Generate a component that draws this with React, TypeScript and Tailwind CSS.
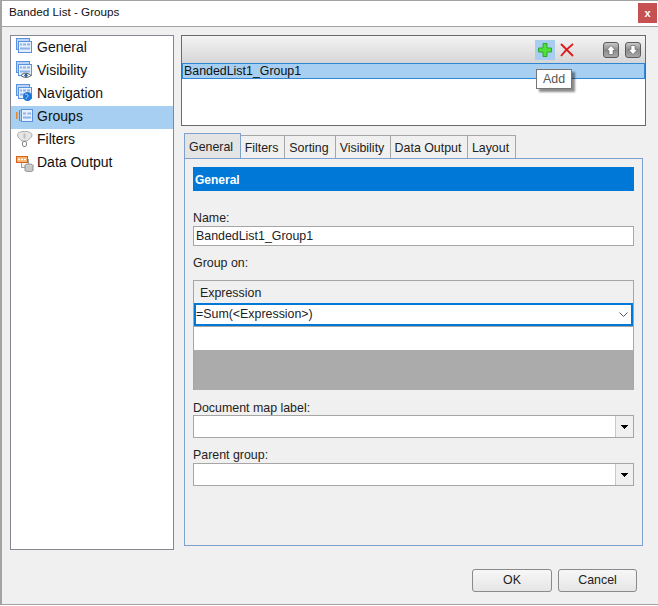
import type { ReactNode } from 'react';

const font = { fontFamily: '"Liberation Sans", Arial, sans-serif' };

// stacked report bands, the base of most of the nav icons
function Band({ x = 0, y = 0 }: { x?: number; y?: number }) {
  return (
    <g transform={`translate(${x} ${y})`}>
      <rect x="0.500" y="0.500" width="13" height="11" fill="#bcd4f6" stroke="#5b92e0" />
      <rect x="2.500" y="3.500" width="13" height="11" fill="#e6effc" stroke="#5b92e0" />
      <path d="M4 6.500h2M7 6.500h3M11 6.500h3M4 10.500h10" stroke="#8db3ea" strokeWidth="2" />
    </g>
  );
}

function GeneralIcon() {
  return (
    <svg className="mb-[3px]" width="18" height="18" viewBox="0 0 18 18">
      <Band />
    </svg>
  );
}

function VisibilityIcon() {
  return (
    <svg className="mb-[3px]" width="18" height="18" viewBox="0 0 18 18">
      <Band />
      <path d="M5 14.500c2.500-3 7-3 10 0-3 2.500-7.500 2.500-10 0z" fill="#fff" stroke="#44505e" />
      <circle cx="10" cy="14.300" r="1.600" fill="#2c5c98" />
    </svg>
  );
}

function NavigationIcon() {
  return (
    <svg className="mb-[3px]" width="18" height="18" viewBox="0 0 18 18">
      <Band />
      <circle cx="11.500" cy="12.500" r="4.500" fill="#1f78d8" />
      <path d="M9 10.500c2-1 3 0 3 1.500s-2 1-2 3" stroke="#9fd0f8" fill="none" />
    </svg>
  );
}

function GroupsIcon() {
  return (
    <svg className="mb-[3px]" width="18" height="18" viewBox="0 0 18 18">
      <rect x="0" y="5" width="1.500" height="7" fill="#e8862c" />
      <path d="M4.500 3.500h-1v10h1" fill="none" stroke="#4a86d8" />
      <rect x="5.500" y="2.500" width="11" height="12" fill="#e6effc" stroke="#5b92e0" />
      <path d="M7 6.500h3M11.500 6.500h3.500M7 10.500h8" stroke="#8db3ea" strokeWidth="2" />
    </svg>
  );
}

function FiltersIcon() {
  return (
    <svg className="mb-[3px]" width="18" height="18" viewBox="0 0 18 18">
      <path d="M1.500 5c0-2.500 3-3.500 7-3.500s7.500 1 7.500 3.500c0 2.500-3.500 4.500-5 6h-5c-1.500-1.500-4.500-3.500-4.500-6z" fill="#e6e6e6" stroke="#a8a8a8" />
      <path d="M8.500 3.500v5" stroke="#bdbdbd" strokeWidth="2" />
      <rect x="6.500" y="11.500" width="4" height="5" rx="1.500" fill="#fff" stroke="#8a8a8a" />
    </svg>
  );
}

function OutputIcon() {
  return (
    <svg className="mb-[2px]" width="18" height="18" viewBox="0 0 18 18">
      <rect x="5.500" y="5.500" width="7" height="8" fill="#f2f2f2" stroke="#a0a0a0" />
      <rect x="0.500" y="2.500" width="11" height="6" fill="#f7b26a" stroke="#d8641c" />
      <path d="M2 5.500h8" stroke="#fff" strokeWidth="1.500" strokeDasharray="2 1" />
      <ellipse cx="13" cy="11.500" rx="4" ry="1.500" fill="#d8d8d8" stroke="#8e8e8e" />
      <path d="M9 11.500v5c0 1.500 8 1.500 8 0v-5" fill="#c8c8c8" stroke="#8e8e8e" />
    </svg>
  );
}

function MoveButton({ down }: { down?: boolean }) {
  return (
    <div className="w-[16px] h-[16px] rounded-[3px] border border-[#5c5c5c] bg-gradient-to-b from-[#c8c8c8] via-[#8c8c8c] to-[#a8a8a8] flex items-center justify-center">
      <svg width="12" height="12" viewBox="0 0 12 12">
        <path
          d={down ? 'M4 1.500h4v4h2.500L6 10.500 1.500 5.500H4z' : 'M4 10.500h4v-4h2.500L6 1.500 1.500 6.500H4z'}
          fill="#fff"
          stroke="#444"
          strokeWidth="0.500"
        />
      </svg>
    </div>
  );
}

function Combo({ className = '' }: { className?: string }) {
  return (
    <div className={`h-[23px] flex border border-[#a6a6a6] bg-white ${className}`}>
      <div className="flex-1" />
      <div className="w-[18px] bg-[#f0f0f0] border-l border-[#c8c8c8] flex items-center justify-center">
        <svg width="7" height="4" viewBox="0 0 7 4">
          <path d="M0 .5h7M1 1.500h5M2 2.500h3M3 3.500h1" stroke="#000" strokeWidth="1" />
        </svg>
      </div>
    </div>
  );
}

function Label({ children, className = '' }: { children: ReactNode; className?: string }) {
  return <div className={`text-[12.400px] leading-[14px] text-[#222] ${className}`}>{children}</div>;
}

const navItems = [
  { name: 'General', icon: <GeneralIcon /> },
  { name: 'Visibility', icon: <VisibilityIcon /> },
  { name: 'Navigation', icon: <NavigationIcon /> },
  { name: 'Groups', icon: <GroupsIcon />, active: true },
  { name: 'Filters', icon: <FiltersIcon /> },
  { name: 'Data Output', icon: <OutputIcon /> },
];

const tabs = ['Filters', 'Sorting', 'Visibility', 'Data Output', 'Layout'];
const tabWidths = ['w-[44px]', 'w-[51px]', 'w-[55px]', 'w-[77px]', 'w-[48px]'];

export default function App() {
  return (
    <div style={font} className="w-[658px] h-[605px] flex flex-col border-t border-b border-l-2 border-[#a3a3a3] bg-[#f0f0f0] text-black overflow-hidden">
      <div className="h-[26px] shrink-0 bg-white flex items-center justify-between border-b border-[#a3a3a3]">
        <span className="pl-[7px] text-[11.700px] text-[#111] leading-[22px] pb-[3px]">Banded List - Groups</span>
        <div className="w-[19px] h-[20px] mr-[1px] mb-[1px] bg-[#c75050] text-white text-[11px] font-bold flex items-center justify-center">x</div>
      </div>

      <div className="flex-1 flex pl-[8px] pt-[8px]">
        <div className="w-[164px] h-[515px] border border-[#828790] bg-white pt-[1px]">
          {navItems.map(item => (
            <div key={item.name} className={`h-[23px] flex items-center pl-[5px] gap-[3px] ${item.active ? 'bg-[#a6cff2]' : ''}`}>
              {item.icon}
              <span className="text-[14px] text-[#111] pb-[3px]">{item.name}</span>
            </div>
          ))}
        </div>

        <div className="ml-[7px] w-[465px]">
          <div className="relative h-[91px] border border-[#6a6a6a] bg-white">
            <div className="h-[27px] bg-gradient-to-b from-[#f4f4f4] to-[#d6d6d6] flex items-center justify-end pr-[4px]">
              <div className="w-[20px] h-[20px] bg-[#a9cdf0] flex items-center justify-center">
                <svg width="14" height="14" viewBox="0 0 14 14">
                  <path d="M5 .5h4v4.500h4.500v4H9v4.500H5V9H.5V5H5z" fill="#4fe03c" stroke="#2fa82a" />
                </svg>
              </div>
              <svg className="ml-[5px]" width="14" height="14" viewBox="0 0 14 14">
                <path d="M1 1l12 12M13 1C9 4 5 8 1 13" stroke="#e01818" strokeWidth="1.800" fill="none" />
              </svg>
              <div className="ml-[29px] flex gap-[6px]">
                <MoveButton />
                <MoveButton down />
              </div>
            </div>
            <div className="h-[16px] bg-[#a6cff2] border border-[#2f86d4] text-[12.400px] leading-[14px] pl-[1px] text-[#111]">
              BandedList1_Group1
            </div>
            {/* tooltip over the list */}
            <div className="absolute left-[354px] top-[33px] px-[6px] h-[20px] flex items-center bg-white border border-[#767676] text-[12.400px] text-[#555] shadow-[3px_3px_2px_rgba(0,0,0,0.45)]">
              Add
            </div>
          </div>

          <div className="mt-[7px] pl-[3px]">
            <div className="flex items-end h-[25px]">
              <div className="w-[57px] h-[25px] bg-[#e4e4e4] border border-b-0 border-[#7da2ce] text-[12.400px] pl-[4px] pt-[6px] leading-[14px] text-[#222]">General</div>
              {tabs.map((t, i) => (
                <div key={t} className={`${tabWidths[i]} h-[23px] bg-[#f0f0f0] border border-l-0 border-b-0 border-[#a6a6a6] text-[12.400px] text-center pt-[5px] pr-[2px] leading-[14px] text-[#222]`}>
                  {t}
                </div>
              ))}
            </div>
            <div className="h-[388px] w-[459px] border border-[#7da2ce] px-[8px] pt-[8px]">
              <div className="h-[24px] bg-[#0078d7] text-white text-[12px] font-bold flex items-center pl-[2px] pt-[1px]">General</div>
              <Label className="mt-[20px]">Name:</Label>
              <input
                readOnly
                value="BandedList1_Group1"
                className="mt-[1px] block w-full h-[20px] border border-[#a6a6a6] bg-white text-[12.400px] px-[2px] text-[#222] outline-none"
              />
              <Label className="mt-[10px]">Group on:</Label>
              <div className="mt-[10px] h-[110px] border-t border-x border-[#a6a6a6] bg-[#ababab] flex flex-col">
                <div className="h-[22px] bg-[#f0f0f0] text-[12.400px] pl-[6px] flex items-center text-[#222] pt-[2px]">Expression</div>
                <div className="h-[23px] bg-white border-2 border-[#0078d7] flex items-center justify-between text-[12.400px] text-[#222]">
                  <span>=Sum(&lt;Expression&gt;)</span>
                  <svg className="mr-[3px]" width="9" height="5" viewBox="0 0 9 5">
                    <path d="M.5.5l4 4 4-4" fill="none" stroke="#555" />
                  </svg>
                </div>
                <div className="h-[24px] bg-white border-t border-[#a6a6a6]" />
              </div>
              <Label className="mt-[11px]">Document map label:</Label>
              <Combo />
              <Label className="mt-[10px]">Parent group:</Label>
              <Combo className="mt-[1px]" />
            </div>
          </div>

          <div className="mt-[23px] pl-[291px] flex gap-[6px]">
            <button className="w-[80px] h-[23px] rounded-[3px] border border-[#8a8a8a] bg-gradient-to-b from-[#f7f7f7] to-[#e6e6e6] text-[12.400px] text-[#222]">OK</button>
            <button className="w-[79px] h-[23px] rounded-[3px] border border-[#8a8a8a] bg-gradient-to-b from-[#f7f7f7] to-[#e6e6e6] text-[12.400px] text-[#222]">Cancel</button>
          </div>
        </div>
      </div>
    </div>
  );
}
